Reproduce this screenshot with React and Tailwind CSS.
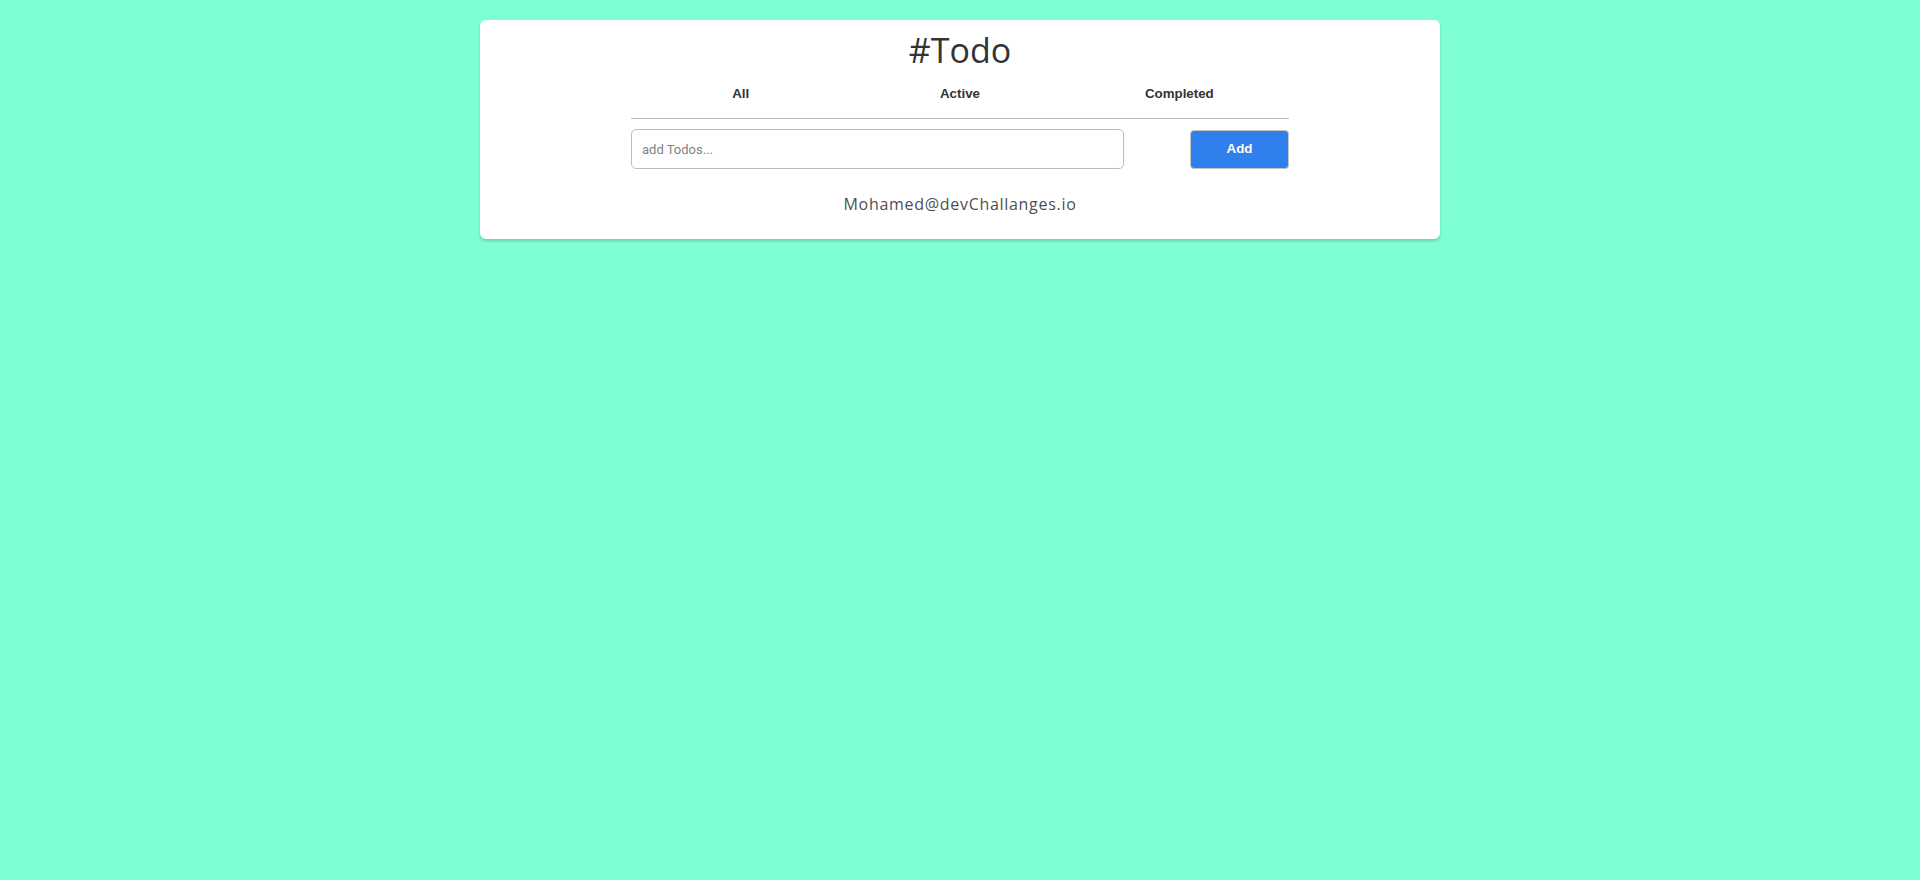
import React, { useState } from "react";

const tabs = ["All", "Active", "Completed"];

const App = () => {
  const [active, setActive] = useState("All");
  const [text, setText] = useState("");

  return (
    <div className="min-h-[880px] w-full bg-[#7fffd4] pt-5">
      <div className="mx-auto w-[960px] rounded-md bg-white pb-[24px] shadow-[0_2px_3px_rgba(0,0,0,0.18)]">
        <h1 className="pt-[8px] text-center font-['Open_Sans',sans-serif] text-[34px] leading-[44px] text-[#333333]">
          #Todo
        </h1>

        <div className="mx-auto w-[658px]">
          <div className="grid grid-cols-3 border-b border-[#bdbdbd] pb-[14px] pt-[12px]">
            {tabs.map((tab) => (
              <button
                key={tab}
                type="button"
                onClick={() => setActive(tab)}
                className="h-[20px] font-['Liberation_Sans',sans-serif] text-[13.33px] font-bold text-[#333333]"
              >
                {tab}
              </button>
            ))}
          </div>

          <div className="mt-[10px] flex items-center justify-between">
            <input
              type="text"
              value={text}
              onChange={(e) => setText(e.target.value)}
              placeholder="add Todos..."
              className="h-[40px] w-[493px] rounded-[5px] border border-[#bdbdbd] px-[10px] font-['Roboto',sans-serif] text-[13px] text-[#333333] outline-none placeholder:text-[#828282]"
            />
            <button
              type="button"
              className="h-[39px] w-[99px] rounded-[4px] border border-[#c4c4c4] bg-[#2f80ed] font-['Liberation_Sans',sans-serif] text-[13.33px] font-bold text-white"
            >
              Add
            </button>
          </div>

          <p className="mt-[24px] text-center font-['Open_Sans',sans-serif] text-[16px] leading-[22px] tracking-[0.7px] text-[#4f4f4f]">
            Mohamed@devChallanges.io
          </p>
        </div>
      </div>
    </div>
  );
};

export default App;
